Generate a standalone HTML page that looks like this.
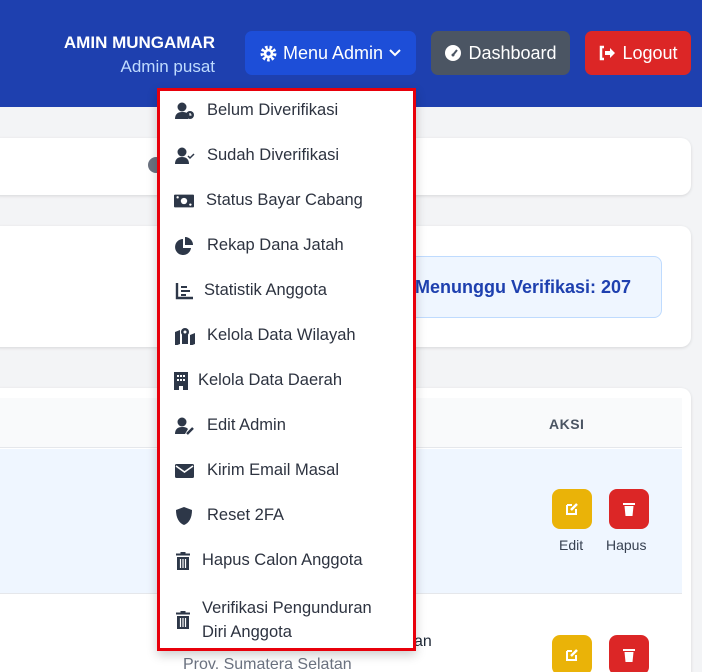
<!DOCTYPE html>
<html><head><meta charset="utf-8"><style>
*{box-sizing:border-box;margin:0;padding:0}
html,body{width:702px;height:672px;overflow:hidden}
body{background:#f3f4f6;font-family:"Liberation Sans",sans-serif;position:relative}
.hdr{position:absolute;left:0;top:0;width:702px;height:107px;background:#1e40af}
.abs{position:absolute}
.btn{position:absolute;top:31px;height:44px;border-radius:7px;color:#fff;font-size:18px;display:flex;align-items:center;justify-content:center;gap:6px}
.card{position:absolute;left:-10px;width:701px;background:#fff;border-radius:10px;box-shadow:0 1px 3px rgba(0,0,0,.12)}
.dd{position:absolute;left:157px;top:88px;width:259px;height:563px;background:#fff;border:3px solid #e8000b;box-shadow:0 4px 10px rgba(0,0,0,.2)}
.it{position:absolute;left:15px;display:flex;align-items:center;font-size:16.5px;color:#2d3340}
.it svg{width:20px;height:18px;margin-right:12px;fill:#2d3748}
.sq{position:absolute;width:40px;height:40px;border-radius:8px;display:flex;align-items:center;justify-content:center}
.lbl{position:absolute;font-size:14px;color:#374151}
</style></head><body>
<div class="hdr"></div>
<div class="abs" style="right:487px;top:33px;color:#fff;font-weight:bold;font-size:17px;white-space:nowrap">AMIN MUNGAMAR</div>
<div class="abs" style="right:487px;top:57px;color:#bfdbfe;font-size:17px;white-space:nowrap">Admin pusat</div>
<div class="btn" style="left:245px;width:171px;background:#1d4ed8"><svg width="17" height="17" viewBox="0 0 16 16"><circle cx="8" cy="8" r="5.5" fill="none" stroke="#fff" stroke-width="4" stroke-dasharray="2.2 1.6"/><circle cx="8" cy="8" r="4.5" fill="#fff"/><circle cx="8" cy="8" r="2" fill="#1d4ed8"/></svg>Menu Admin<svg width="12" height="10" viewBox="0 0 12 10"><path d="M1 2l5 5 5-5" fill="none" stroke="#fff" stroke-width="2"/></svg></div>
<div class="btn" style="left:431px;width:139px;background:#4b5563"><svg width="18" height="18" viewBox="0 0 18 18"><circle cx="9" cy="9" r="8" fill="#fff"/><path d="M9 11l4-5" stroke="#4b5563" stroke-width="2"/><circle cx="9" cy="11" r="1.5" fill="#4b5563"/></svg>Dashboard</div>
<div class="btn" style="left:585px;width:106px;background:#dc2626"><svg width="18" height="16" viewBox="0 0 18 16"><path d="M6 2H3v12h3" fill="none" stroke="#fff" stroke-width="2.5"/><path d="M7 6h5V3l5 5-5 5v-3H7z" fill="#fff"/></svg>Logout</div>

<div class="card" style="top:138px;height:57px"></div>
<div class="abs" style="left:148px;top:157px;width:16px;height:16px;border-radius:50%;background:#6b7280"></div>
<div class="card" style="top:226px;height:121px"></div>
<div class="abs" style="left:398px;top:256px;width:264px;height:62px;background:#eff6ff;border:1px solid #bfdbfe;border-radius:8px;color:#1e40af;font-weight:bold;font-size:18px;line-height:60px;padding-left:16px;white-space:nowrap">Menunggu Verifikasi: 207</div>
<div class="card" style="top:388px;height:300px"></div>
<div class="abs" style="left:0;top:398px;width:682px;height:50px;background:#f9fafb;border-bottom:1px solid #e5e7eb"></div>
<div class="abs" style="left:549px;top:416px;font-size:14px;font-weight:bold;color:#4b5563;letter-spacing:.5px">AKSI</div>
<div class="abs" style="left:0;top:449px;width:682px;height:145px;background:#eff6ff;border-bottom:1px solid #e5e7eb"></div>
<div class="sq" style="left:552px;top:489px;background:#eab308"><svg width="14" height="14" viewBox="0 0 14 14"><path d="M2 3h5M2 3v9h9V7" fill="none" stroke="#fff" stroke-width="2"/><path d="M6 8l6-6" stroke="#fff" stroke-width="2.5"/></svg></div>
<div class="sq" style="left:609px;top:489px;background:#dc2626"><svg width="12" height="14" viewBox="0 0 12 14"><rect x="0" y="1" width="12" height="2" fill="#fff"/><path d="M1.5 4h9l-1 10h-7z" fill="#fff"/></svg></div>
<div class="lbl" style="left:559px;top:537px">Edit</div>
<div class="lbl" style="left:606px;top:537px">Hapus</div>
<div class="sq" style="left:552px;top:635px;background:#eab308"><svg width="14" height="14" viewBox="0 0 14 14"><path d="M2 3h5M2 3v9h9V7" fill="none" stroke="#fff" stroke-width="2"/><path d="M6 8l6-6" stroke="#fff" stroke-width="2.5"/></svg></div>
<div class="sq" style="left:609px;top:635px;background:#dc2626"><svg width="12" height="14" viewBox="0 0 12 14"><rect x="0" y="1" width="12" height="2" fill="#fff"/><path d="M1.5 4h9l-1 10h-7z" fill="#fff"/></svg></div>
<div class="abs" style="left:414px;top:633px;font-size:16px;color:#1f2937">an</div>
<div class="abs" style="left:183px;top:656px;font-size:16px;color:#6b7280">Prov. Sumatera Selatan</div>

<div class="dd">
<div class="it" style="top:10px"><svg viewBox="0 0 20 18"><circle cx="7" cy="5" r="4.5"/><path d="M0 17c0-5 3-7 7-7s5 1 6 2v5z"/><circle cx="15" cy="13" r="4"/><path d="M15 11v2h1.5" stroke="#fff" stroke-width="1.2" fill="none"/></svg>Belum Diverifikasi</div>
<div class="it" style="top:55px"><svg viewBox="0 0 20 18"><circle cx="7" cy="5" r="4.5"/><path d="M0 17c0-5 3-7 7-7s7 2 7 7z"/><path d="M13 9l2 2 4-4" stroke="#2d3748" stroke-width="1.5" fill="none"/></svg>Sudah Diverifikasi</div>
<div class="it" style="top:100px;left:14px"><svg viewBox="0 0 22 18"><rect x="0" y="2" width="22" height="14" rx="1"/><circle cx="11" cy="9" r="3.5" fill="#fff"/><circle cx="4" cy="5" r="1.3" fill="#fff"/><circle cx="18" cy="13" r="1.3" fill="#fff"/></svg>Status Bayar Cabang</div>
<div class="it" style="top:145px"><svg viewBox="0 0 20 18"><path d="M8 2a8 8 0 1 0 8 9H8z"/><path d="M10 0a8 8 0 0 1 8 8h-8z"/></svg>Rekap Dana Jatah</div>
<div class="it" style="top:190px;left:15px"><svg viewBox="0 0 18 18" style="margin-right:9px"><path d="M1 1v15h16" stroke="#2d3748" stroke-width="2.4" fill="none"/><path d="M5 5h6M5 9h9M5 13h5" stroke="#2d3748" stroke-width="2"/></svg>Statistik Anggota</div>
<div class="it" style="top:235px"><svg viewBox="0 0 20 18"><path d="M0 5l5-2v14l-5 2zM15 8l5-2v11l-5 2z"/><path d="M7 4h6v13H7z"/><circle cx="10" cy="5" r="4"/><circle cx="10" cy="5" r="1.5" fill="#fff"/></svg>Kelola Data Wilayah</div>
<div class="it" style="top:280px;left:14px"><svg viewBox="0 0 14 18" style="width:14px;margin-right:10px"><path d="M0 0h14v18H9v-4H5v4H0z"/><g fill="#fff"><rect x="3" y="3" width="2" height="2"/><rect x="6" y="3" width="2" height="2"/><rect x="9" y="3" width="2" height="2"/><rect x="3" y="7" width="2" height="2"/><rect x="6" y="7" width="2" height="2"/><rect x="9" y="7" width="2" height="2"/></g></svg>Kelola Data Daerah</div>
<div class="it" style="top:325px"><svg viewBox="0 0 20 18"><circle cx="7" cy="5" r="4.5"/><path d="M0 17c0-5 3-7 7-7s5 1 6 2l-3 5z"/><path d="M12 17l6-6" stroke="#2d3748" stroke-width="2.5"/></svg>Edit Admin</div>
<div class="it" style="top:370px"><svg viewBox="0 0 20 18"><rect x="0" y="2" width="19" height="14" rx="1.5"/><path d="M1 4l8.5 6L18 4" stroke="#fff" stroke-width="1.6" fill="none"/></svg>Kirim Email Masal</div>
<div class="it" style="top:415px"><svg viewBox="0 0 20 18"><path d="M9 0l8 3c0 8-3 13-8 15C4 16 1 11 1 3z"/></svg>Reset 2FA</div>
<div class="it" style="top:460px;left:16px"><svg viewBox="0 0 14 18" style="width:14px;margin-right:12px"><rect x="0" y="1.5" width="14" height="2"/><rect x="4.5" y="0" width="5" height="2"/><path d="M1 5h12v13H1z"/><path d="M4.5 7v9M7 7v9M9.5 7v9" stroke="#fff" stroke-width="1.2"/></svg>Hapus Calon Anggota</div>
<div class="it" style="top:505px;left:16px;line-height:24px"><svg viewBox="0 0 14 18" style="width:14px;margin-right:12px"><rect x="0" y="1.5" width="14" height="2"/><rect x="4.5" y="0" width="5" height="2"/><path d="M1 5h12v13H1z"/><path d="M4.5 7v9M7 7v9M9.5 7v9" stroke="#fff" stroke-width="1.2"/></svg><span>Verifikasi Pengunduran<br>Diri Anggota</span></div>
</div>
</body></html>
